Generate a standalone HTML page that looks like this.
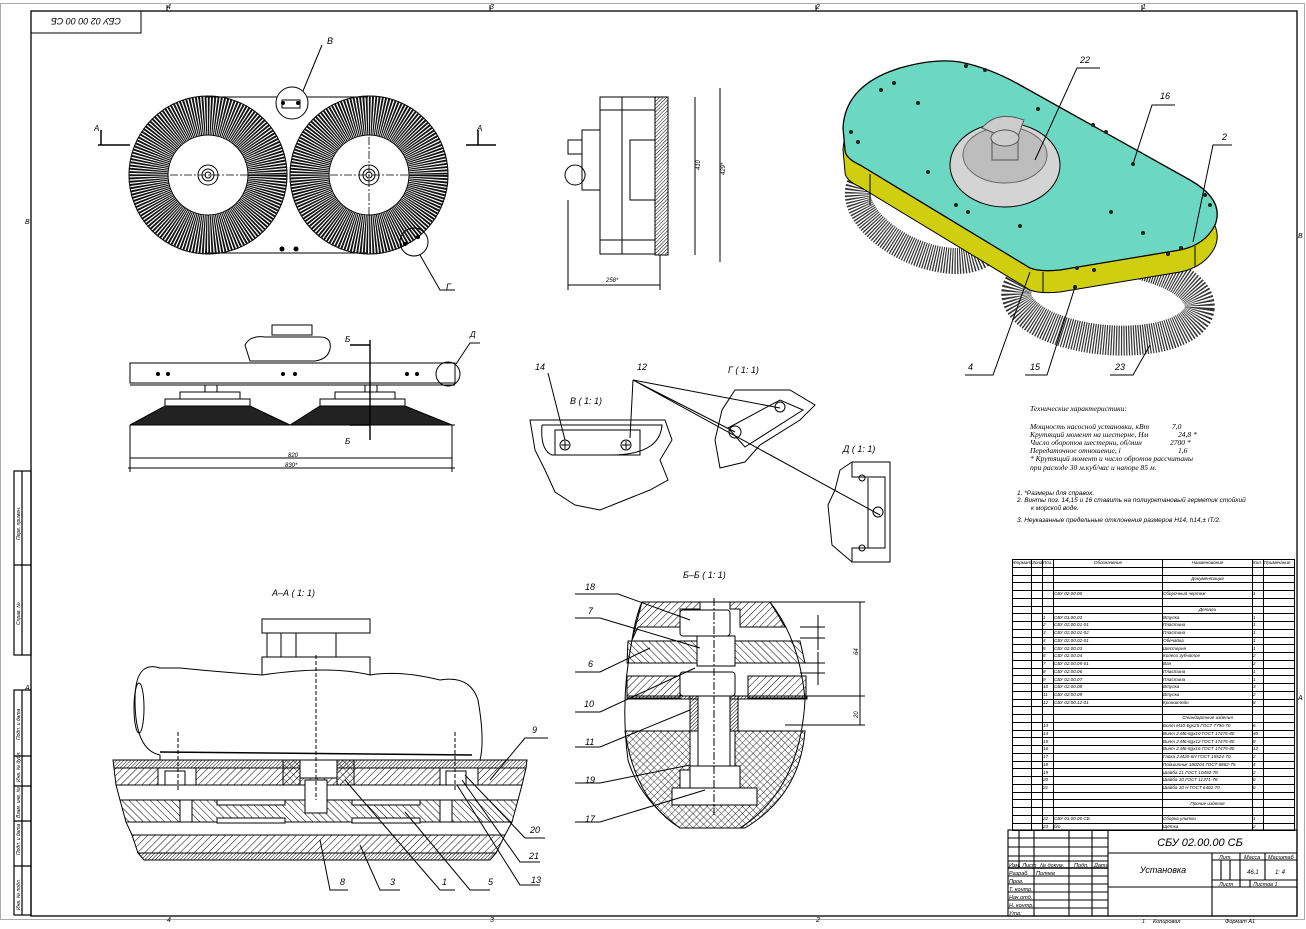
<!DOCTYPE html>
<html><head><meta charset="utf-8">
<style>
html,body{margin:0;padding:0;background:#fff;}
body{width:1306px;height:929px;position:relative;overflow:hidden;font-family:"Liberation Sans","DejaVu Sans",sans-serif;}
svg{position:absolute;left:0;top:0;}
.t{font-family:"Liberation Sans",sans-serif;font-style:italic;fill:#000;}
.s{font-family:"Liberation Serif",serif;font-style:italic;fill:#000;}
table.p{position:absolute;left:1012px;top:559px;width:282px;border-collapse:collapse;table-layout:fixed;font:italic 4.6px "Liberation Sans",sans-serif;}
table.p td{border:1px solid #000;height:7.75px;padding:0;line-height:6px;white-space:nowrap;overflow:hidden;box-sizing:border-box;}
table.p td.c{text-align:center;}
</style></head><body>
<svg width="1306" height="929" viewBox="0 0 1306 929" xmlns="http://www.w3.org/2000/svg">
<defs>
<pattern id="h" width="5" height="5" patternUnits="userSpaceOnUse" patternTransform="rotate(45)"><line x1="0" y1="0" x2="0" y2="5" stroke="#000" stroke-width="1"/></pattern>
<pattern id="h2" width="5" height="5" patternUnits="userSpaceOnUse" patternTransform="rotate(-45)"><line x1="0" y1="0" x2="0" y2="5" stroke="#000" stroke-width="1"/></pattern>
<pattern id="hd" width="2.5" height="2.5" patternUnits="userSpaceOnUse" patternTransform="rotate(45)"><line x1="0" y1="0" x2="0" y2="2.5" stroke="#000" stroke-width="1"/></pattern>
<pattern id="x" width="5" height="5" patternUnits="userSpaceOnUse" patternTransform="rotate(45)"><path d="M0 0V5M0 0H5" stroke="#000" stroke-width="0.8" fill="none"/></pattern>
</defs>
<rect x="0" y="0" width="1306" height="929" fill="#fff"/>
<rect x="0.5" y="3.5" width="1304" height="916" fill="none" stroke="#aaa"/>
<rect x="31" y="11" width="1266" height="905" fill="none" stroke="#000" stroke-width="1.3"/>
<rect x="31" y="11" width="110" height="22" fill="none" stroke="#000"/>
<text class="t" x="86" y="26" font-size="9" text-anchor="middle" transform="rotate(180 86 22)">СБУ 02 00 00 СБ</text>
<text class="t" x="167" y="9" font-size="7">4</text><text class="t" x="490" y="9" font-size="7">3</text><text class="t" x="816" y="9" font-size="7">2</text><text class="t" x="1142" y="9" font-size="7">1</text>
<text class="t" x="167" y="922" font-size="7">4</text><text class="t" x="490" y="922" font-size="7">3</text><text class="t" x="816" y="922" font-size="7">2</text>
<line x1="167" y1="11" x2="167" y2="5" stroke="#000"/><line x1="490" y1="11" x2="490" y2="5" stroke="#000"/><line x1="816" y1="11" x2="816" y2="5" stroke="#000"/><line x1="1142" y1="11" x2="1142" y2="5" stroke="#000"/>
<text class="t" x="25" y="224" font-size="7">В</text><text class="t" x="25" y="690" font-size="7">А</text><text class="t" x="1298" y="700" font-size="7">А</text><text class="t" x="1298" y="238" font-size="7">В</text>
<g fill="none" stroke="#000" stroke-width="1.2">
<rect x="14" y="471" width="17" height="184"/><line x1="22" y1="471" x2="22" y2="655"/><line x1="14" y1="565" x2="31" y2="565"/>
<rect x="14" y="690" width="17" height="225"/><line x1="22" y1="690" x2="22" y2="915"/>
<line x1="14" y1="756" x2="31" y2="756"/><line x1="14" y1="786" x2="31" y2="786"/><line x1="14" y1="821" x2="31" y2="821"/><line x1="14" y1="866" x2="31" y2="866"/>
</g>
<g class="t" font-size="5">
<text transform="translate(20 540) rotate(-90)">Перв. примен.</text>
<text transform="translate(20 625) rotate(-90)">Справ. №</text>
<text transform="translate(20 740) rotate(-90)">Подп. и дата</text>
<text transform="translate(20 782) rotate(-90)">Инв. № дубл.</text>
<text transform="translate(20 818) rotate(-90)">Взам. инв. №</text>
<text transform="translate(20 855) rotate(-90)">Подп. и дата</text>
<text transform="translate(20 910) rotate(-90)">Инв. № подл.</text>
</g>

<g>
<path d="M205 97 H368 M205 253 H368" stroke="#000" fill="none"/>
<circle cx="208" cy="175" r="79" fill="none" stroke="#000"/>
<circle cx="208" cy="175" r="60" fill="none" stroke="#111" stroke-width="39" stroke-dasharray="1.5 1"/>
<circle cx="208" cy="175" r="40" fill="#fff" stroke="#000"/>
<circle cx="369" cy="175" r="79" fill="none" stroke="#000"/>
<circle cx="369" cy="175" r="60" fill="none" stroke="#111" stroke-width="39" stroke-dasharray="1.5 1"/>
<circle cx="369" cy="175" r="40" fill="#fff" stroke="#000"/>
<g fill="none" stroke="#000"><circle cx="208" cy="175" r="10"/><circle cx="208" cy="175" r="6"/><circle cx="208" cy="175" r="3"/>
<circle cx="369" cy="175" r="10"/><circle cx="369" cy="175" r="6"/><circle cx="369" cy="175" r="3"/></g>
<path d="M170 175 H250 M330 175 H410 M369 137 V215" stroke="#000" stroke-dasharray="8 2 2 2" stroke-width="0.8"/>
<circle cx="282" cy="249" r="2.5"/><circle cx="296" cy="249" r="2.5"/>
<circle cx="292" cy="103" r="16" fill="#fff" stroke="#000"/><path d="M282 100h18v8h-18z" fill="none" stroke="#000"/><circle cx="283" cy="103" r="2"/><circle cx="298" cy="103" r="2"/>
<path d="M303 91 L322 45" stroke="#000" fill="none"/><text class="t" x="327" y="44" font-size="9">В</text>
<circle cx="414" cy="242" r="14" fill="none" stroke="#000"/><circle cx="405" cy="244" r="2"/><circle cx="418" cy="237" r="2"/>
<path d="M420 255 L440 290 H455" stroke="#000" fill="none"/><text class="t" x="446" y="290" font-size="9">Г</text>
<path d="M98 145 H130 M101 145 V130 M466 145 H496 M478 145 V130" stroke="#000" stroke-width="1.5" fill="none"/>
<text class="t" x="94" y="131" font-size="8">А</text><text class="t" x="477" y="131" font-size="8">А</text>
</g>

<g fill="none" stroke="#000">
<rect x="600" y="97" width="55" height="157"/><line x1="622" y1="97" x2="622" y2="254"/><line x1="600" y1="110" x2="655" y2="110"/><line x1="600" y1="240" x2="655" y2="240"/>
<path d="M655 97 L668 97 L668 255 L655 255 Z" fill="url(#hd)"/>
<path d="M582 130 h18 v60 h-18 z M568 140 h14 v14 h-14z M575 165 a10 10 0 1 0 0.1 0" />
<path d="M630 140 h25 v60 h-25 z"/>
<line x1="695" y1="97" x2="695" y2="255"/><line x1="720" y1="88" x2="720" y2="262"/>
<line x1="568" y1="285" x2="660" y2="285"/><line x1="568" y1="200" x2="568" y2="290"/><line x1="660" y1="255" x2="660" y2="290"/>
</g>
<text class="t" x="700" y="170" font-size="6" transform="rotate(-90 700 170)">410</text>
<text class="t" x="725" y="175" font-size="6" transform="rotate(-90 725 175)">429*</text>
<text class="t" x="606" y="282" font-size="6">258*</text>

<g fill="none" stroke="#000">
<rect x="130" y="363" width="325" height="20"/><line x1="130" y1="385" x2="455" y2="385"/>
<path d="M245 345 q5 -10 20 -8 h55 q12 0 10 12 q-2 10 -15 12 h-65 z" fill="#fff"/>
<rect x="272" y="325" width="40" height="10"/>
<rect x="205" y="385" width="12" height="7"/><rect x="180" y="392" width="60" height="7"/><rect x="165" y="399" width="85" height="7"/>
<rect x="365" y="385" width="12" height="7"/><rect x="335" y="392" width="60" height="7"/><rect x="320" y="399" width="85" height="7"/>
<path d="M130 425 L165 406 H250 L290 425 Z M290 425 L320 406 H405 L452 425 Z" fill="#222"/>
<line x1="130" y1="425" x2="455" y2="425"/><line x1="130" y1="425" x2="130" y2="472"/><line x1="452" y1="425" x2="452" y2="472"/>
<line x1="130" y1="458" x2="452" y2="458"/><line x1="128" y1="468" x2="455" y2="468"/>
<path d="M370 340 V440 M350 345 H370 M350 425 H370" stroke-width="1.4"/>
<circle cx="448" cy="374" r="12"/>
<path d="M456 364 L470 343 H480"/>
</g>
<g fill="#000"><circle cx="158" cy="374" r="2"/><circle cx="168" cy="374" r="2"/><circle cx="283" cy="374" r="2"/><circle cx="295" cy="374" r="2"/><circle cx="407" cy="374" r="2"/><circle cx="417" cy="374" r="2"/></g>
<text class="t" x="345" y="342" font-size="8">Б</text><text class="t" x="345" y="444" font-size="8">Б</text><text class="t" x="470" y="337" font-size="8">Д</text>
<text class="t" x="288" y="457" font-size="6">820</text><text class="t" x="285" y="467" font-size="6">830*</text>

<g fill="none" stroke="#000">
<path d="M530 420 H665 L672 440 L660 460 L668 480 L650 490 L625 500 L600 510 L575 505 L555 492 L545 470 L535 450 Z"/>
<path d="M542 425 H662 Q660 455 610 455 H552 Q540 450 542 425"/>
<rect x="555" y="430" width="85" height="25"/>
<circle cx="565" cy="445" r="5"/><circle cx="626" cy="445" r="5"/>
<path d="M561 445h8M565 441v8M622 445h8M626 441v8"/>
<path d="M548 373 L565 440 M633 380 L630 438 M633 380 L780 408 M633 380 L735 432 M633 380 L880 515"/>
</g>
<text class="t" x="535" y="370" font-size="9">14</text><text class="t" x="637" y="370" font-size="9">12</text>
<text class="t" x="570" y="404" font-size="9">В ( 1: 1)</text>
<g fill="none" stroke="#000">
<path d="M735 390 L790 390 L815 405 L800 420 L760 445 L745 462 L720 468 L715 440 L722 410 Z"/>
<path d="M728 428 L780 400 L803 410 L745 447 Z"/>
<circle cx="735" cy="432" r="6"/><circle cx="780" cy="407" r="5"/>
</g>
<text class="t" x="728" y="373" font-size="9">Г ( 1: 1)</text>
<g fill="none" stroke="#000">
<path d="M852 462 H890 V562 H852 V548 H885 V477 H852 Z"/>
<path d="M852 462 L840 470 L835 490 L828 505 L830 525 L832 545 L852 562"/>
<path d="M868 478 V548"/><circle cx="878" cy="512" r="5"/><circle cx="862" cy="478" r="3"/><circle cx="862" cy="548" r="3"/>
</g>
<text class="t" x="843" y="452" font-size="9">Д ( 1: 1)</text>

<g>
<ellipse cx="925" cy="215" rx="72" ry="38" fill="none" stroke="#333" stroke-width="26" stroke-dasharray="1.2 1.3" transform="rotate(25 925 215)"/>
<ellipse cx="1108" cy="300" rx="92" ry="40" fill="none" stroke="#333" stroke-width="30" stroke-dasharray="1.2 1.3" transform="rotate(5 1108 300)"/>
<path d="M845 172 L843 150 Q845 107 900 90 Q935 80 960 84 Q990 90 1020 107 L1190 202 Q1225 222 1215 247 Q1205 267 1180 272 L1060 292 Q1040 294 1030 290 L860 187 Q845 180 845 172 Z" fill="#cfcf10" stroke="#000"/>
<path d="M845 150 L843 128 Q845 85 900 68 Q935 58 960 62 Q990 68 1020 85 L1190 180 Q1225 200 1215 225 Q1205 245 1180 250 L1060 270 Q1040 272 1030 268 L860 165 Q845 158 845 150 Z" fill="#6dd8c2" stroke="#000" stroke-width="1.3"/>
<path d="M870 174 V205 M1043 272 V292 M1195 246 V267" stroke="#000"/>
<ellipse cx="1005" cy="165" rx="55" ry="42" fill="#d4d4d4" stroke="#000"/>
<ellipse cx="1005" cy="155" rx="42" ry="28" fill="#bdbdbd" stroke="#666"/>
<path d="M982 128 q15 -18 42 -8 l-8 22 z" fill="#ccc" stroke="#555"/>
<rect x="992" y="138" width="26" height="22" fill="#bbb" stroke="#555"/>
<ellipse cx="1005" cy="138" rx="14" ry="8" fill="#ccc" stroke="#555"/>
<g fill="#222"><circle cx="966" cy="66" r="2"/><circle cx="985" cy="70" r="2"/><circle cx="894" cy="83" r="2"/><circle cx="881" cy="90" r="2"/><circle cx="918" cy="103" r="2"/><circle cx="1038" cy="109" r="2"/><circle cx="1093" cy="125" r="2"/><circle cx="1106" cy="132" r="2"/><circle cx="1133" cy="164" r="2"/><circle cx="851" cy="132" r="2"/><circle cx="858" cy="142" r="2"/><circle cx="928" cy="172" r="2"/><circle cx="956" cy="205" r="2"/><circle cx="968" cy="212" r="2"/><circle cx="1020" cy="226" r="2"/><circle cx="1111" cy="212" r="2"/><circle cx="1143" cy="233" r="2"/><circle cx="1205" cy="195" r="2"/><circle cx="1210" cy="205" r="2"/><circle cx="1168" cy="254" r="2"/><circle cx="1181" cy="248" r="2"/><circle cx="1077" cy="268" r="2"/><circle cx="1094" cy="270" r="2"/><circle cx="1075" cy="287" r="2"/></g>
<g fill="none" stroke="#000"><path d="M1035 160 L1077 68 H1100 M1133 164 L1152 105 H1175 M1193 242 L1213 145 H1232 M1030 272 L993 375 H965 M1075 287 L1047 375 H1025 M1150 345 L1133 375 H1110"/></g>
<text class="t" x="1080" y="63" font-size="9">22</text><text class="t" x="1160" y="99" font-size="9">16</text><text class="t" x="1222" y="140" font-size="9">2</text>
<text class="t" x="968" y="370" font-size="9">4</text><text class="t" x="1030" y="370" font-size="9">15</text><text class="t" x="1115" y="370" font-size="9">23</text>
</g>

<g class="s" font-size="7.5">
<text x="1030" y="411">Технические характеристики:</text>
<text x="1030" y="429">Мощность насосной установки, кВт</text><text x="1172" y="429">7,0</text>
<text x="1030" y="437">Крутящий момент на шестерне, Нм</text><text x="1178" y="437">24,8 *</text>
<text x="1030" y="445">Число оборотов шестерни, об/мин</text><text x="1170" y="445">2700 *</text>
<text x="1030" y="453">Передаточное отношение, i</text><text x="1178" y="453">1,6</text>
<text x="1030" y="461">* Крутящий момент и число обротов рассчитаны</text>
<text x="1030" y="470">при расходе 30 м.куб/час и напоре 85 м.</text>
</g>
<g class="t" font-size="6.5">
<text x="1017" y="495">1.   *Размеры для справок.</text>
<text x="1017" y="502">2.   Винты поз. 14,15 и 16 ставить на полиуретановый герметик стойкий</text>
<text x="1031" y="510">к морской воде.</text>
<text x="1017" y="522">3.   Неуказанные предельные отклонения размеров H14, h14,±  IT/2.</text>
</g>

<text class="t" x="272" y="596" font-size="9">А–А ( 1: 1)</text>
<g stroke="#000">
<rect x="262" y="619" width="108" height="14" fill="#fff"/>
<rect x="267" y="633" width="14" height="24" fill="#fff"/><rect x="296" y="633" width="40" height="24" fill="#fff"/>
<rect x="262" y="657" width="108" height="21" fill="#fff"/>
<path d="M160 668 Q135 660 135 700 Q135 750 160 755 L160 760 L480 760 Q485 740 478 700 Q470 675 440 680 Q400 670 370 675 Q330 665 262 675 Q220 672 180 668 Z" fill="#fff"/>
<ellipse cx="139" cy="708" rx="5" ry="25" fill="none"/>
<line x1="160" y1="752" x2="472" y2="755" stroke-width="1.5"/>
<path d="M113 760 H527 L526 768 H114 Z" fill="url(#hd)"/>
<path d="M114 768 H526 L522 785 H116 Z" fill="url(#h)"/>
<path d="M116 785 H522 L518 800 H120 Z" fill="#fff"/>
<path d="M120 800 H518 L512 822 H126 Z" fill="url(#h2)"/>
<path d="M126 822 H512 L505 835 H132 Z" fill="#fff"/>
<path d="M132 835 H505 L496 853 H138 Z" fill="url(#h)"/>
<path d="M138 853 H496 L490 860 H144 Z" fill="url(#hd)"/>
<rect x="158" y="768" width="38" height="17" fill="#fff"/><rect x="165" y="771" width="20" height="14" fill="#fff"/>
<rect x="440" y="768" width="38" height="17" fill="#fff"/><rect x="446" y="771" width="20" height="14" fill="#fff"/>
<rect x="283" y="760" width="17" height="25" fill="url(#x)"/><rect x="337" y="760" width="17" height="25" fill="url(#x)"/>
<rect x="300" y="760" width="37" height="18" fill="#fff"/><rect x="305" y="780" width="22" height="33" fill="#fff"/>
<rect x="180" y="800" width="12" height="22" fill="#fff"/><rect x="440" y="800" width="12" height="22" fill="#fff"/>
<rect x="217" y="800" width="68" height="5" fill="#fff"/><rect x="217" y="818" width="68" height="5" fill="#fff"/>
<rect x="352" y="800" width="68" height="5" fill="#fff"/><rect x="352" y="818" width="68" height="5" fill="#fff"/>
</g>
<path d="M316 655 V800 M178 732 V790 M455 732 V790" stroke="#000" stroke-dasharray="4 2" fill="none"/>
<g fill="none" stroke="#000">
<path d="M490 780 L525 738 H548 M320 840 L330 890 H348 M360 845 L380 890 H400 M345 780 L440 890 H455 M405 812 L470 890 H490 M465 775 L525 838 H545 M462 780 L520 862 H540 M457 785 L520 885 H540"/>
</g>
<g class="t" font-size="9"><text x="532" y="733">9</text><text x="340" y="885">8</text><text x="390" y="885">3</text><text x="442" y="885">1</text><text x="488" y="885">5</text><text x="530" y="833">20</text><text x="529" y="859">21</text><text x="531" y="883">13</text></g>

<text class="t" x="683" y="578" font-size="9">Б–Б ( 1: 1)</text>
<g stroke="#000">
<path d="M642 602 H770 Q800 640 805 700 Q800 790 740 828 H680 Q640 800 628 760 Q620 700 632 640 Z" fill="#fff"/>
<path d="M642 602 H700 V609 H680 V627 H638 L632 640 Q636 615 642 602Z" fill="url(#h)"/>
<path d="M730 602 H770 L778 615 L785 627 H740 V609 H730Z" fill="url(#h)"/>
<path d="M628 641 H697 V663 H627 Z" fill="url(#h2)"/><path d="M733 641 H800 L805 663 H733 Z" fill="url(#h2)"/>
<path d="M627 676 H680 V698 H627 Z" fill="url(#h)"/><path d="M748 676 H806 V698 H748 Z" fill="url(#h)"/>
<rect x="627" y="696" width="180" height="3" fill="url(#hd)"/>
<path d="M625 731 H690 V770 H680 V800 H740 V770 H735 V731 H805 Q800 795 745 828 H680 Q635 800 625 731Z" fill="url(#x)"/>
<rect x="680" y="610" width="50" height="26" rx="3" fill="#fff"/>
<rect x="697" y="636" width="38" height="30" fill="#fff"/>
<rect x="680" y="672" width="55" height="24" rx="3" fill="#fff"/>
<rect x="690" y="696" width="8" height="35" fill="url(#hd)"/><rect x="730" y="696" width="8" height="35" fill="url(#hd)"/>
<rect x="698" y="696" width="32" height="70" fill="#fff"/>
<rect x="690" y="766" width="50" height="38" fill="#fff"/><rect x="672" y="788" width="85" height="17" fill="#fff"/>
</g>
<path d="M714 598 V815" stroke="#000" stroke-dasharray="8 2 2 2" fill="none"/>
<g fill="none" stroke="#000">
<path d="M760 602 H865 M760 696 H865 M785 725 H865 M860 602 V725 M800 627 H825 M800 638 H825 M800 663 H825 M800 673 H825 M818 615 V650 M818 652 V685"/>
<path d="M575 594 H618 L690 620 M575 618 H600 L700 648 M575 672 H600 L650 648 M575 712 H600 L695 668 M575 747 H600 L690 710 M575 783 H600 L690 765 M575 822 H600 L705 790"/>
</g>
<g class="t" font-size="9"><text x="585" y="590">18</text><text x="588" y="614">7</text><text x="588" y="667">6</text><text x="584" y="707">10</text><text x="585" y="745">11</text><text x="585" y="783">19</text><text x="585" y="822">17</text></g>
<text class="t" x="858" y="655" font-size="6" transform="rotate(-90 858 655)">64</text>
<text class="t" x="858" y="718" font-size="6" transform="rotate(-90 858 718)">20</text>

<g fill="none" stroke="#000" stroke-width="1.1">
<rect x="1008" y="830" width="289" height="86"/>
<line x1="1108" y1="830" x2="1108" y2="916"/>
<line x1="1108" y1="853" x2="1297" y2="853"/><line x1="1108" y1="887" x2="1297" y2="887"/>
<line x1="1212" y1="853" x2="1212" y2="916"/>
<line x1="1212" y1="860" x2="1297" y2="860"/><line x1="1212" y1="880" x2="1297" y2="880"/>
<line x1="1240" y1="853" x2="1240" y2="887"/><line x1="1265" y1="853" x2="1265" y2="880"/>
<line x1="1221" y1="860" x2="1221" y2="880"/><line x1="1230" y1="860" x2="1230" y2="880"/>
<line x1="1250" y1="880" x2="1250" y2="887"/>
<line x1="1019" y1="830" x2="1019" y2="868"/><line x1="1034" y1="830" x2="1034" y2="916"/><line x1="1069" y1="830" x2="1069" y2="916"/><line x1="1092" y1="830" x2="1092" y2="916"/>
<line x1="1008" y1="838" x2="1108" y2="838"/><line x1="1008" y1="847" x2="1108" y2="847"/><line x1="1008" y1="856" x2="1108" y2="856"/><line x1="1008" y1="861" x2="1108" y2="861"/><line x1="1008" y1="868" x2="1108" y2="868" stroke-width="1.5"/>
<line x1="1008" y1="876" x2="1108" y2="876"/><line x1="1008" y1="884" x2="1108" y2="884"/><line x1="1008" y1="892" x2="1108" y2="892"/><line x1="1008" y1="900" x2="1108" y2="900"/><line x1="1008" y1="908" x2="1108" y2="908"/>
</g>
<g class="t">
<text x="1200" y="846" font-size="11" text-anchor="middle">СБУ 02.00.00 СБ</text>
<text x="1163" y="873" font-size="9" text-anchor="middle">Установка</text>
<g font-size="5.5"><text x="1219" y="859">Лит.</text><text x="1244" y="859">Масса</text><text x="1268" y="859">Масштаб</text>
<text x="1247" y="874" font-size="6">46,1</text><text x="1275" y="874" font-size="6">1: 4</text>
<text x="1219" y="886">Лист</text><text x="1253" y="886">Листов   1</text>
<text x="1009" y="867">Изм. Лист</text><text x="1040" y="867">№ докум.</text><text x="1074" y="867">Подп.</text><text x="1094" y="867">Дата</text>
<text x="1009" y="875">Разраб.</text><text x="1036" y="875">Поляев</text>
<text x="1009" y="883">Пров.</text><text x="1009" y="891">Т. контр.</text><text x="1009" y="899">Нач.отд.</text><text x="1009" y="907">Н. контр.</text><text x="1009" y="915">Утв.</text>
<text x="1142" y="923">1</text><text x="1153" y="923">Копировал</text><text x="1225" y="923">Формат А1</text></g>
</g>
</svg>

<table class="p">
<colgroup><col style="width:19px"><col style="width:11px"><col style="width:11px"><col style="width:109px"><col style="width:90px"><col style="width:11px"><col style="width:31px"></colgroup>
<tr><td>Формат</td><td>Зона</td><td>Поз.</td><td class="c">Обозначение</td><td class="c">Наименование</td><td>Кол.</td><td>Примечание</td></tr>
<tr><td></td><td></td><td></td><td></td><td></td><td></td><td></td></tr>
<tr><td></td><td></td><td></td><td></td><td class="c">Документация</td><td></td><td></td></tr>
<tr><td></td><td></td><td></td><td></td><td></td><td></td><td></td></tr>
<tr><td></td><td></td><td></td><td>СБУ 02.00.00</td><td>Сборочный чертеж</td><td>1</td><td></td></tr>
<tr><td></td><td></td><td></td><td></td><td></td><td></td><td></td></tr>
<tr><td></td><td></td><td></td><td></td><td class="c">Детали</td><td></td><td></td></tr>
<tr><td></td><td></td><td>1</td><td>СБУ 01.00.03</td><td>Втулка</td><td>1</td><td></td></tr>
<tr><td></td><td></td><td>2</td><td>СБУ 02.00.01-01</td><td>Пластина</td><td>1</td><td></td></tr>
<tr><td></td><td></td><td>3</td><td>СБУ 02.00.01-02</td><td>Пластина</td><td>1</td><td></td></tr>
<tr><td></td><td></td><td>4</td><td>СБУ 02.00.02-01</td><td>Обечайка</td><td>1</td><td></td></tr>
<tr><td></td><td></td><td>5</td><td>СБУ 02.00.03</td><td>Шестерня</td><td>1</td><td></td></tr>
<tr><td></td><td></td><td>6</td><td>СБУ 02.00.04</td><td>Колесо зубчатое</td><td>2</td><td></td></tr>
<tr><td></td><td></td><td>7</td><td>СБУ 02.00.05-01</td><td>Вал</td><td>2</td><td></td></tr>
<tr><td></td><td></td><td>8</td><td>СБУ 02.00.06</td><td>Пластина</td><td>1</td><td></td></tr>
<tr><td></td><td></td><td>9</td><td>СБУ 02.00.07</td><td>Пластина</td><td>1</td><td></td></tr>
<tr><td></td><td></td><td>10</td><td>СБУ 02.00.08</td><td>Втулка</td><td>3</td><td></td></tr>
<tr><td></td><td></td><td>11</td><td>СБУ 02.00.09</td><td>Втулка</td><td>2</td><td></td></tr>
<tr><td></td><td></td><td>12</td><td>СБУ 02.00.12-01</td><td>Кронштейн</td><td>8</td><td></td></tr>
<tr><td></td><td></td><td></td><td></td><td></td><td></td><td></td></tr>
<tr><td></td><td></td><td></td><td></td><td class="c">Стандартные изделия</td><td></td><td></td></tr>
<tr><td></td><td></td><td>13</td><td></td><td>Болт М10-6gx25 ГОСТ 7796-70</td><td>6</td><td></td></tr>
<tr><td></td><td></td><td>14</td><td></td><td>Винт 2.М6-6gx10 ГОСТ 17475-80</td><td>40</td><td></td></tr>
<tr><td></td><td></td><td>15</td><td></td><td>Винт 2.М6-6gx12 ГОСТ 17475-80</td><td>8</td><td></td></tr>
<tr><td></td><td></td><td>16</td><td></td><td>Винт 2.М6-6gx16 ГОСТ 17475-80</td><td>12</td><td></td></tr>
<tr><td></td><td></td><td>17</td><td></td><td>Гайка 2.М20-6Н ГОСТ 15524-70</td><td>2</td><td></td></tr>
<tr><td></td><td></td><td>18</td><td></td><td>Подшипник 180204 ГОСТ 8882-75</td><td>4</td><td></td></tr>
<tr><td></td><td></td><td>19</td><td></td><td>Шайба 21 ГОСТ 10450-78</td><td>2</td><td></td></tr>
<tr><td></td><td></td><td>20</td><td></td><td>Шайба 10 ГОСТ 11371-78</td><td>6</td><td></td></tr>
<tr><td></td><td></td><td>21</td><td></td><td>Шайба 10 Н ГОСТ 6402-70</td><td>6</td><td></td></tr>
<tr><td></td><td></td><td></td><td></td><td></td><td></td><td></td></tr>
<tr><td></td><td></td><td></td><td></td><td class="c">Прочие изделия</td><td></td><td></td></tr>
<tr><td></td><td></td><td></td><td></td><td></td><td></td><td></td></tr>
<tr><td></td><td></td><td>22</td><td>СБУ 01.00.00 СБ</td><td>Сборка улитки</td><td>1</td><td></td></tr>
<tr><td></td><td></td><td>23</td><td>б/о</td><td>Щётка</td><td>2</td><td></td></tr>
</table>
</body></html>
